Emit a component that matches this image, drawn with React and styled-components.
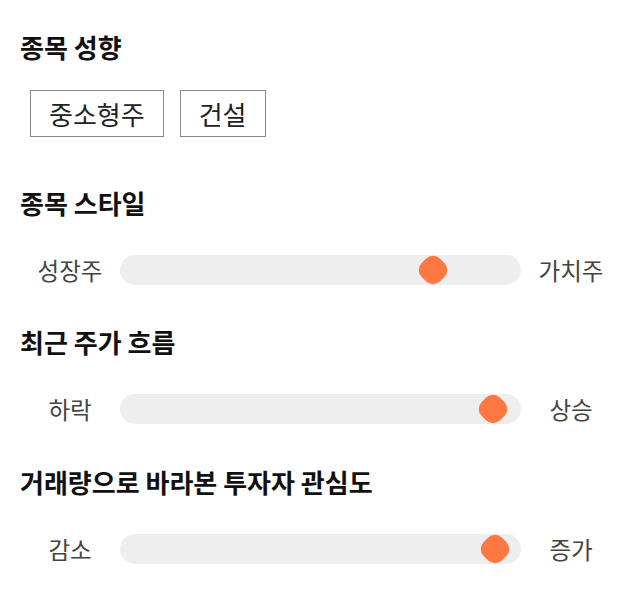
import React from 'react';
import styled, { createGlobalStyle } from 'styled-components';

const GlobalStyle = createGlobalStyle`
  body {
    margin: 0;
    background: #fff;
    font-family: "Noto Sans CJK KR", "Noto Sans", sans-serif;
  }
`;

const Page = styled.div`
  padding: 31px 19px 0 20px;
`;

const Section = styled.section`
  display: flex;
  flex-direction: column;
  gap: ${(p) => p.$gap}px;
  margin-bottom: ${(p) => p.$after}px;
`;

const Title = styled.h2`
  margin: 0;
  font-size: 26px;
  line-height: 32px;
  font-weight: 700;
  color: #111;
`;

const TagList = styled.div`
  display: flex;
  gap: 16px;
  padding-left: 10px;
`;

const Tag = styled.button`
  height: 47px;
  padding: 0 18px;
  border: 1px solid #888;
  background: #fff;
  font-family: inherit;
  font-size: 26px;
  color: #222;
  cursor: pointer;
`;

const SliderRow = styled.div`
  display: flex;
  align-items: center;
  height: 30px;
`;

const SideLabel = styled.span`
  width: 100px;
  flex-shrink: 0;
  text-align: center;
  font-size: 23.5px;
  color: #444;
`;

const Track = styled.div`
  position: relative;
  flex: 1;
  height: 30px;
  border-radius: 15px;
  background: #eeeeee;
`;

const Thumb = styled.div`
  position: absolute;
  top: 50%;
  width: 26px;
  height: 26px;
  border-radius: 10px;
  background: #ff7842;
  transform: translate(-50%, -50%) rotate(45deg);
`;

const styles = [
  { title: '종목 스타일', left: '성장주', right: '가치주', value: 78, after: 41 },
  { title: '최근 주가 흐름', left: '하락', right: '상승', value: 93, after: 42 },
  { title: '거래량으로 바라본 투자자 관심도', left: '감소', right: '증가', value: 93.5, after: 0 },
];

const App = () => (
  <>
    <GlobalStyle />
    <Page>
      <Section $gap={27} $after={50}>
        <Title>종목 성향</Title>
        <TagList>
          <Tag>중소형주</Tag>
          <Tag>건설</Tag>
        </TagList>
      </Section>
      {styles.map((s) => (
        <Section key={s.title} $gap={36} $after={s.after}>
          <Title>{s.title}</Title>
          <SliderRow>
            <SideLabel>{s.left}</SideLabel>
            <Track>
              <Thumb style={{ left: `${s.value}%` }} />
            </Track>
            <SideLabel>{s.right}</SideLabel>
          </SliderRow>
        </Section>
      ))}
    </Page>
  </>
);

export default App;
